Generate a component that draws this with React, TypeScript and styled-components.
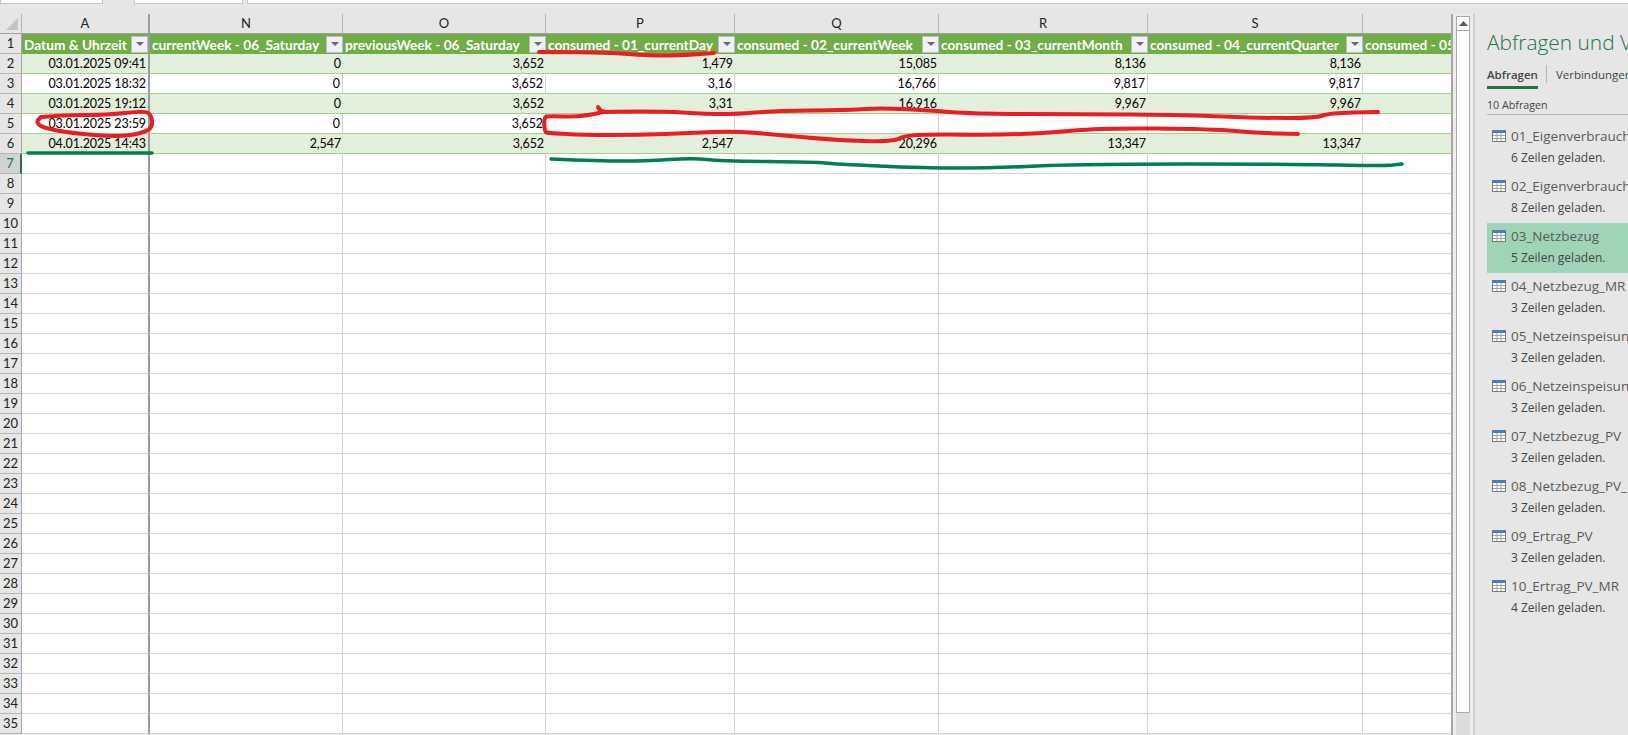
import styled, { createGlobalStyle } from 'styled-components';

const GRID = '#d4d4d4';
const BAND = '#e2efda';
const BAND_LINE = '#a9d08e';
const HEAD = '#70ad47';
const EXCEL_GREEN = '#217346';

const COLUMNS = [
    { letter: 'A', title: 'Datum & Uhrzeit', width: 128 },
    { letter: 'N', title: 'currentWeek - 06_Saturday', width: 193 },
    { letter: 'O', title: 'previousWeek - 06_Saturday', width: 203 },
    { letter: 'P', title: 'consumed - 01_currentDay', width: 189 },
    { letter: 'Q', title: 'consumed - 02_currentWeek', width: 204 },
    { letter: 'R', title: 'consumed - 03_currentMonth', width: 209 },
    { letter: 'S', title: 'consumed - 04_currentQuarter', width: 215 },
    { letter: '', title: 'consumed - 05', width: 88 },
];

const ROWS = [
    ['03.01.2025 09:41', '0', '3,652', '1,479', '15,085', '8,136', '8,136', ''],
    ['03.01.2025 18:32', '0', '3,652', '3,16', '16,766', '9,817', '9,817', ''],
    ['03.01.2025 19:12', '0', '3,652', '3,31', '16,916', '9,967', '9,967', ''],
    ['03.01.2025 23:59', '0', '3,652', '', '', '', '', ''],
    ['04.01.2025 14:43', '2,547', '3,652', '2,547', '20,296', '13,347', '13,347', ''],
];

const QUERIES = [
    ['01_Eigenverbrauch', '6 Zeilen geladen.'],
    ['02_Eigenverbrauch', '8 Zeilen geladen.'],
    ['03_Netzbezug', '5 Zeilen geladen.'],
    ['04_Netzbezug_MR', '3 Zeilen geladen.'],
    ['05_Netzeinspeisung', '3 Zeilen geladen.'],
    ['06_Netzeinspeisung', '3 Zeilen geladen.'],
    ['07_Netzbezug_PV', '3 Zeilen geladen.'],
    ['08_Netzbezug_PV_MR', '3 Zeilen geladen.'],
    ['09_Ertrag_PV', '3 Zeilen geladen.'],
    ['10_Ertrag_PV_MR', '4 Zeilen geladen.'],
];

const template = COLUMNS.map((c) => `${c.width}px`).join(' ');

// pen strokes drawn over the sheet, in page coordinates
const RED_STROKES: number[][][] = [
    [[539, 52], [601, 52], [655, 56], [687, 55], [714, 53]],
    [
        [41, 117], [64, 115], [107, 115], [143, 111], [151, 114], [153, 127], [143, 133], [118, 137], [71, 133], [43, 128],
        [36, 122], [41, 117],
    ],
    [[598, 107], [600, 111], [606, 112]],
    [
        [603, 112], [584, 117], [548, 116], [545, 117], [544, 123], [545, 132], [548, 133], [584, 135], [637, 135], [691, 133],
        [734, 131], [780, 135], [834, 140], [894, 142], [907, 134], [994, 135], [1048, 133], [1101, 128], [1212, 129], [1259, 133],
        [1298, 134],
    ],
    [
        [603, 112], [655, 111], [709, 114], [737, 114], [773, 111], [851, 110], [880, 108], [923, 110], [976, 114], [1080, 114],
        [1187, 115], [1259, 118], [1316, 118], [1330, 113], [1378, 112],
    ],
];
const GREEN_STROKES: number[][][] = [
    [[28, 153], [152, 153]],
    [
        [551, 159], [601, 161], [644, 161], [694, 158], [719, 161], [816, 162], [834, 164], [923, 168], [994, 168], [1080, 164],
        [1294, 164], [1384, 166], [1402, 164],
    ],
];

const smooth = (pts: number[][]) => {
    let d = `M${pts[0][0]} ${pts[0][1]}`;
    for (let i = 1; i < pts.length - 1; i++) {
        const mx = (pts[i][0] + pts[i + 1][0]) / 2;
        const my = (pts[i][1] + pts[i + 1][1]) / 2;
        d += ` Q${pts[i][0]} ${pts[i][1]} ${mx} ${my}`;
    }
    const last = pts[pts.length - 1];
    return `${d} L${last[0]} ${last[1]}`;
};

const TableIcon = () => (
    <svg width='14' height='12' viewBox='0 0 14 12'>
        <rect x='0.5' y='0.5' width='13' height='11' fill='#fff' stroke='#7a7a7a' />
        <rect x='0' y='0' width='14' height='3' fill='#4a7ebb' />
        <path d='M5 3v8M9 3v8M1 5.5h12M1 8.5h12' stroke='#a0a0a0' fill='none' />
    </svg>
);

const Arrow = () => (
    <svg width='8' height='4' viewBox='0 0 8 4'>
        <path d='M0 0h8L4 4z' fill='#6a6a6a' />
    </svg>
);

export default function App() {
    return (
        <Page>
            <GlobalStyle />
            <TopStrip>
                <StripBox $width={103} />
                <StripBox $width={109} />
                <StripBox $grow />
            </TopStrip>
            <Body>
                <Sheet>
                    <ColumnHead>
                        <Corner>
                            <svg width='12' height='12' viewBox='0 0 12 12'>
                                <path d='M12 0v12H0z' fill='#c4c4c4' />
                            </svg>
                        </Corner>
                        <HeadGrid>
                            {COLUMNS.map((c, i) => (
                                <ColumnLetter key={i} $frozen={i === 0} $open={c.letter === ''}>
                                    {c.letter}
                                </ColumnLetter>
                            ))}
                        </HeadGrid>
                    </ColumnHead>
                    <SheetRow>
                        <RowNumber>1</RowNumber>
                        <HeadGrid>
                            {COLUMNS.map((c, i) => (
                                <TitleCell key={i} $frozen={i === 0}>
                                    <TitleText>{c.title}</TitleText>
                                    {c.letter !== '' && (
                                        <FilterButton>
                                            <Arrow />
                                        </FilterButton>
                                    )}
                                </TitleCell>
                            ))}
                        </HeadGrid>
                    </SheetRow>
                    {Array.from({ length: 34 }, (_, r) => {
                        const values = ROWS[r];
                        return (
                            <SheetRow key={r}>
                                <RowNumber $active={r === 5}>{r + 2}</RowNumber>
                                <HeadGrid>
                                    {COLUMNS.map((c, i) => (
                                        <Cell
                                            key={i}
                                            $frozen={i === 0}
                                            $band={values ? r % 2 === 0 : false}
                                            $inTable={Boolean(values)}
                                            $open={c.letter === ''}
                                        >
                                            {values ? values[i] : ''}
                                        </Cell>
                                    ))}
                                </HeadGrid>
                            </SheetRow>
                        );
                    })}
                </Sheet>
                <ScrollColumn>
                    <ScrollButton>
                        <svg width='9' height='5' viewBox='0 0 9 5'>
                            <path d='M0 5h9L4.5 0z' fill='#5f5f5f' />
                        </svg>
                    </ScrollButton>
                    <ScrollThumb />
                    <ScrollTrack />
                </ScrollColumn>
                <Panel>
                    <PanelTitle>Abfragen und V</PanelTitle>
                    <Tabs>
                        <ActiveTab>Abfragen</ActiveTab>
                        <TabDivider />
                        <Tab>Verbindungen</Tab>
                    </Tabs>
                    <QueryCount>10 Abfragen</QueryCount>
                    <QueryList>
                        {QUERIES.map(([name, status], i) => (
                            <Query key={name} $selected={i === 2}>
                                <QueryIcon>
                                    <TableIcon />
                                </QueryIcon>
                                <QueryText>
                                    <QueryName>{name}</QueryName>
                                    <QueryStatus>{status}</QueryStatus>
                                </QueryText>
                            </Query>
                        ))}
                    </QueryList>
                </Panel>
            </Body>
            <Ink width='1628' height='735' viewBox='0 0 1628 735'>
                {RED_STROKES.map((s, i) => (
                    <path key={i} d={smooth(s)} stroke='#ec1c24' strokeWidth='4' />
                ))}
                {GREEN_STROKES.map((s, i) => (
                    <path key={i} d={smooth(s)} stroke='#00804f' strokeWidth='3.5' />
                ))}
            </Ink>
        </Page>
    );
}

const GlobalStyle = createGlobalStyle`
    html, body {
        margin: 0;
        padding: 0;
        overflow: hidden;
        background: #e6e6e6;
    }
`;

const Page = styled.div`
    position: relative;
    width: 1628px;
    height: 735px;
    overflow: hidden;
    background: #e6e6e6;
    font-family: Lato, 'Liberation Sans', sans-serif;
    display: flex;
    flex-direction: column;
`;

const TopStrip = styled.div`
    height: 14px;
    flex: none;
    display: flex;
    gap: 31px;
`;

const StripBox = styled.div<{ $width?: number; $grow?: boolean }>`
    height: 4px;
    width: ${(p) => (p.$width ? `${p.$width}px` : 'auto')};
    flex: ${(p) => (p.$grow ? '1' : 'none')};
    box-sizing: border-box;
    background: #fff;
    border: 1px solid #c6c6c6;
    border-top: none;
    &:last-child {
        margin-left: -27px;
        border-right: none;
    }
`;

const Body = styled.div`
    flex: 1;
    display: flex;
    min-height: 0;
`;

const Sheet = styled.div`
    width: 1453px;
    flex: none;
    overflow: hidden;
    border-right: 2px solid #a6a6a6;
    box-sizing: border-box;
`;

const ColumnHead = styled.div`
    display: flex;
    height: 20px;
    background: #e6e6e6;
`;

const Corner = styled.div`
    width: 22px;
    flex: none;
    display: flex;
    align-items: flex-end;
    justify-content: flex-end;
    padding: 0 3px 3px 0;
    box-sizing: border-box;
    border-right: 1px solid #b5b5b5;
    border-bottom: 1px solid #9f9f9f;
`;

const HeadGrid = styled.div`
    display: grid;
    grid-template-columns: ${template};
    flex: none;
`;

const ColumnLetter = styled.div<{ $frozen?: boolean; $open?: boolean }>`
    font-size: 13px;
    line-height: 19px;
    text-align: center;
    color: #222;
    box-sizing: border-box;
    border-bottom: 1px solid #9f9f9f;
    border-right: ${(p) => (p.$frozen ? '2px solid #9b9b9b' : p.$open ? 'none' : '1px solid #b5b5b5')};
`;

const SheetRow = styled.div`
    display: flex;
    height: 20px;
`;

const RowNumber = styled.div<{ $active?: boolean }>`
    width: 22px;
    flex: none;
    box-sizing: border-box;
    font-size: 13px;
    line-height: 19px;
    text-align: center;
    color: ${(p) => (p.$active ? EXCEL_GREEN : '#222')};
    background: ${(p) => (p.$active ? '#d2d2d2' : '#e6e6e6')};
    border-bottom: 1px solid #b5b5b5;
    border-right: ${(p) => (p.$active ? `2px solid ${EXCEL_GREEN}` : '1px solid #a6a6a6')};
`;

const TitleCell = styled.div<{ $frozen?: boolean }>`
    background: ${HEAD};
    display: flex;
    align-items: center;
    justify-content: space-between;
    padding-left: 2px;
    min-width: 0;
    overflow: hidden;
    box-sizing: border-box;
    border-right: ${(p) => (p.$frozen ? '2px solid #9b9b9b' : 'none')};
`;

const TitleText = styled.span`
    color: #fff;
    font-weight: 700;
    font-size: 13.7px;
    white-space: nowrap;
`;

const FilterButton = styled.span`
    width: 17px;
    height: 17px;
    flex: none;
    background: #f0f0f8;
    border: 1px solid #bcbcc8;
    box-sizing: border-box;
    display: flex;
    align-items: center;
    justify-content: center;
`;

const Cell = styled.div<{ $frozen?: boolean; $band?: boolean; $inTable?: boolean; $open?: boolean }>`
    background: ${(p) => (p.$band ? BAND : '#fff')};
    color: #000;
    font-size: 12.5px;
    letter-spacing: -0.1px;
    line-height: 19px;
    text-align: right;
    padding-right: 2px;
    box-sizing: border-box;
    white-space: nowrap;
    border-bottom: 1px solid ${(p) => (p.$inTable ? BAND_LINE : GRID)};
    border-right: ${(p) =>
        p.$frozen ? '2px solid #9b9b9b' : p.$band || p.$open ? 'none' : `1px solid ${GRID}`};
`;

const ScrollColumn = styled.div`
    width: 20px;
    flex: none;
    padding: 2px 3px 0;
    box-sizing: border-box;
    background: #ececec;
    display: flex;
    flex-direction: column;
`;

const ScrollButton = styled.div`
    height: 15px;
    flex: none;
    background: #fff;
    border: 1px solid #ababab;
    box-sizing: border-box;
    display: flex;
    align-items: center;
    justify-content: center;
`;

const ScrollThumb = styled.div`
    height: 682px;
    flex: none;
    background: #fff;
    border: 1px solid #ababab;
    border-top: none;
    box-sizing: border-box;
`;

const ScrollTrack = styled.div`
    flex: 1;
    background: #dcdcdc;
`;

const Panel = styled.aside`
    flex: 1;
    min-width: 0;
    box-sizing: border-box;
    border-left: 2px solid #d0d0d0;
    padding-left: 12px;
    overflow: hidden;
    font-family: 'Open Sans', sans-serif;
    color: #444;
`;

const PanelTitle = styled.div`
    color: ${EXCEL_GREEN};
    font-size: 20.9px;
    font-weight: 300;
    line-height: 30px;
    margin-top: 13px;
    white-space: nowrap;
`;

const Tabs = styled.div`
    display: flex;
    align-items: flex-start;
    height: 27px;
    margin-top: 8px;
    font-size: 11.5px;
    white-space: nowrap;
`;

const Tab = styled.div`
    line-height: 20px;
    color: #444;
    flex: none;
`;

const ActiveTab = styled(Tab)`
    font-weight: 600;
    height: 24px;
    box-sizing: border-box;
    border-bottom: 3px solid ${EXCEL_GREEN};
`;

const TabDivider = styled.div`
    width: 1px;
    height: 18px;
    flex: none;
    margin: 0 9px 0 8px;
    background: #b5b5b5;
`;

const QueryCount = styled.div`
    font-size: 10.7px;
    line-height: 16px;
    height: 18px;
    margin-top: 5px;
    border-bottom: 1px solid #b8b8b8;
    box-sizing: border-box;
    white-space: nowrap;
`;

const QueryList = styled.div`
    margin-top: 8px;
`;

const Query = styled.div<{ $selected?: boolean }>`
    height: 50px;
    display: flex;
    padding: 4px 0 0 5px;
    box-sizing: border-box;
    background: ${(p) => (p.$selected ? '#9fd5b7' : 'transparent')};
`;

const QueryIcon = styled.div`
    width: 19px;
    flex: none;
    padding-top: 3px;
    display: flex;
    align-items: flex-start;
`;

const QueryText = styled.div`
    min-width: 0;
    white-space: nowrap;
`;

const QueryName = styled.div`
    font-size: 13.5px;
    line-height: 19px;
    color: #5a5a5a;
`;

const QueryStatus = styled.div`
    font-size: 12px;
    line-height: 17px;
    margin-top: 3px;
    color: #444;
`;

const Ink = styled.svg`
    position: absolute;
    left: 0;
    top: 0;
    fill: none;
    stroke-linecap: round;
    stroke-linejoin: round;
    pointer-events: none;
`;
